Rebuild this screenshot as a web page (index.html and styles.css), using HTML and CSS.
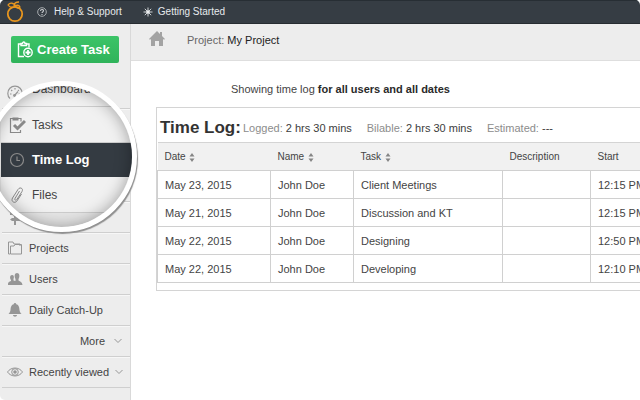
FILE: index.html
```html
<!DOCTYPE html>
<html lang="en">
<head>
<meta charset="utf-8">
<title>Time Log</title>
<link rel="stylesheet" href="styles.css">
</head>
<body>
<svg class="defs" aria-hidden="true">
  <symbol id="i-gauge" viewBox="0 0 16 16"><path d="M3 13.500A7.200 7.200 0 1 1 13 13.500" fill="none" stroke="currentColor" stroke-width="1.200"/><path d="M3 9h1.500M4.200 5l1 1M8 3v1.500M11.800 5l-.8.8M11.500 9H13M7.500 10.500L11 6.500" fill="none" stroke="currentColor" stroke-width="1.200"/><circle cx="7.500" cy="10.500" r="1.400" fill="currentColor"/></symbol>
  <symbol id="i-check" viewBox="0 0 18 18"><path d="M5.500 2.500H2.500v14h10V14M10 2.500h3v3" fill="none" stroke="currentColor" stroke-width="1.200"/><path d="M4.500 1.500h6v3h-6z" fill="currentColor"/><path d="M6 9l3.500 3.500 7.500-7.500" fill="none" stroke="currentColor" stroke-width="3"/></symbol>
  <symbol id="i-clock" viewBox="0 0 18 18"><circle cx="9" cy="9" r="6.500" fill="none" stroke="currentColor" stroke-width="1.200"/><path d="M9 5.500v4h3" fill="none" stroke="currentColor" stroke-width="1.200"/></symbol>
  <symbol id="i-clip" viewBox="0 0 18 18"><path d="M11.500 5L7 12.500c-.8 1.500 1 2.500 1.900 1L14 5.500c1.800-3-2-5-3.900-2.200L4.500 12c-2 3.600 2.500 6 4.600 2.800L13.500 8" fill="none" stroke="currentColor" stroke-width="1"/></symbol>
  <symbol id="i-sign" viewBox="0 0 16 16"><path d="M7 2h2v14H7z" fill="currentColor"/><path d="M3 3h9l2 1.500L12 6H3zM13 9H5L3 10.500 5 12h8z" fill="currentColor"/></symbol>
  <symbol id="i-folder" viewBox="0 0 16 16"><path d="M3 14H1.500V2H6l1 2h6v2" fill="none" stroke="currentColor" stroke-width="1"/><path d="M3.500 14V6H7l1-1.500h6.500V14z" fill="none" stroke="currentColor" stroke-width="1"/></symbol>
  <symbol id="i-users" viewBox="0 0 16 16"><path d="M1 13c0-2 1-2 3-3V9C2.500 7 3 4 5 4s2.300 2 1.500 4v1.500C8 10 8 10 8.500 9.700V8C7 5.500 7.500 2 10 2s3 3.500 1.500 6v1.500C14 11 15 11 15.500 14H1z" fill="currentColor"/></symbol>
  <symbol id="i-bell" viewBox="0 0 16 16"><path d="M8 1c.8 0 1.200.6 1.200 1.300C12 3 12.300 5.500 12.500 8c.2 2 1 2.800 2 4h-13c1-1.200 1.800-2 2-4 .2-2.500.5-5 3.300-5.700C6.800 1.600 7.200 1 8 1zM6 13h4c0 2.300-4 2.300-4 0z" fill="currentColor"/></symbol>
  <symbol id="i-eye" viewBox="0 0 16 16"><path d="M.5 8C4 2.700 12 2.700 15.500 8 12 13.300 4 13.300.5 8z" fill="none" stroke="currentColor"/><circle cx="8" cy="8" r="3.300" fill="none" stroke="currentColor"/><circle cx="8" cy="8" r="1.800" fill="currentColor"/></symbol>
  <symbol id="i-down" viewBox="0 0 8 6"><path d="M.5 1L4 4.500 7.500 1" fill="none" stroke="currentColor"/></symbol>
  <symbol id="i-sort" viewBox="0 0 6 9"><path d="M3 0l2.500 3.500h-5zM3 9L.5 5.500h5z" fill="currentColor"/></symbol>
</svg>

<div class="app">
  <header class="topbar">
    <a class="logo" href="#" aria-label="Home">
      <svg viewBox="0 0 20 22" width="20" height="22"><circle cx="10" cy="13" r="7.200" fill="none" stroke="#e8961e" stroke-width="1.800"/><path d="M3 4c2-3 6-2 8 1C8 7 5 7 3 4zM9 5c0-3 2-4 5-4M10 5c2-1 4-1 5 1-2 2-4 1-5-1z" fill="none" stroke="#e8961e" stroke-width="1.300"/></svg>
    </a>
    <a class="toplink help" href="#">
      <svg viewBox="0 0 10 10" width="10" height="10"><circle cx="5" cy="5" r="4.300" fill="none" stroke="#a9adb0"/><path d="M3.500 4c0-2 3-2 3-.2C6.500 5 5 4.900 5 6M5 7v1" fill="none" stroke="#c9cccf" stroke-width="1.100"/></svg>
      <span>Help &amp; Support</span>
    </a>
    <a class="toplink" href="#">
      <svg viewBox="0 0 10 10" width="10" height="10"><path d="M5 .5v9M.5 5h9M1.800 1.800l6.400 6.400M8.200 1.800L1.800 8.200" stroke="#dfe2e4" stroke-width=".9"/><circle cx="5" cy="5" r="1.800" fill="#eceeef"/></svg>
      <span>Getting Started</span>
    </a>
  </header>

  <div class="body">
    <aside class="sidebar">
      <button class="create" type="button">
        <svg viewBox="0 0 16 17" width="16" height="17" fill="none" stroke="#fff" stroke-width="1.400"><path d="M4 3H1.500v12.500H7M9.500 3H12v3.500"/><path d="M4 4.500v-2h1.500C5.500.5 8 .5 8 2.500h1.500v2z"/><circle cx="11" cy="11.500" r="4.200"/><path d="M11 9v5M8.500 11.500h5" stroke-width="1.800"/></svg>
        Create Task
      </button>
      <nav class="menu">
        <div class="row"><svg><use href="#i-gauge"/></svg></div>
        <div class="row"></div>
        <div class="row"></div>
        <div class="row"></div>
        <div class="row"><svg><use href="#i-sign"/></svg></div>
        <a class="row" href="#"><svg><use href="#i-folder"/></svg>Projects</a>
        <a class="row" href="#"><svg><use href="#i-users"/></svg>Users</a>
        <a class="row" href="#"><svg><use href="#i-bell"/></svg>Daily Catch-Up</a>
        <a class="row more" href="#">More<svg class="chev"><use href="#i-down"/></svg></a>
        <a class="row" href="#"><svg><use href="#i-eye"/></svg>Recently viewed<svg class="chev"><use href="#i-down"/></svg></a>
      </nav>
    </aside>

    <main class="main">
      <div class="crumbs">
        <svg viewBox="0 0 16 15" width="16" height="15"><path d="M8 0l3 3V1h2v4l3 3-1 .8L14 8v7h-4v-5H6v5H2V8l-1 .8L0 8z" fill="#a3a3a3"/></svg>
        <p>Project: <span>My Project</span></p>
      </div>
      <div class="content">
        <p class="summary">Showing time log <b>for all users and all dates</b></p>
        <section class="card">
          <div class="cardhead">
            <h1>Time Log:</h1>
            <p>Logged: <span>2 hrs 30 mins</span></p>
            <p>Bilable: <span>2 hrs 30 mins</span></p>
            <p>Estimated: <span>---</span></p>
          </div>
          <table>
            <colgroup><col class="c-date"><col class="c-name"><col class="c-task"><col class="c-desc"><col class="c-start"></colgroup>
            <thead>
              <tr><th>Date <svg><use href="#i-sort"/></svg></th><th>Name <svg><use href="#i-sort"/></svg></th><th>Task <svg><use href="#i-sort"/></svg></th><th>Description</th><th>Start</th></tr>
            </thead>
            <tbody>
              <tr><td>May 23, 2015</td><td>John Doe</td><td>Client Meetings</td><td></td><td>12:15 PM</td></tr>
              <tr><td>May 21, 2015</td><td>John Doe</td><td>Discussion and KT</td><td></td><td>12:15 PM</td></tr>
              <tr><td>May 22, 2015</td><td>John Doe</td><td>Designing</td><td></td><td>12:50 PM</td></tr>
              <tr><td>May 22, 2015</td><td>John Doe</td><td>Developing</td><td></td><td>12:10 PM</td></tr>
            </tbody>
          </table>
        </section>
      </div>
    </main>
  </div>

  <nav class="lens">
    <a class="lensrow" href="#"><svg></svg>Dashboard</a>
    <a class="lensrow" href="#"><svg><use href="#i-check"/></svg>Tasks</a>
    <a class="lensrow active" href="#"><svg><use href="#i-clock"/></svg>Time Log</a>
    <a class="lensrow" href="#"><svg><use href="#i-clip"/></svg>Files</a>
  </nav>
</div>
</body>
</html>
```

FILE: styles.css
```css
* { box-sizing: border-box; }
body {
  margin: 0;
  background: #fff;
  color: #444;
  font: 11px/16px "Liberation Sans", Arial, sans-serif;
}
a { color: inherit; text-decoration: none; }
p, h1 { margin: 0; }
.defs { display: none; }
.app {
  position: relative;
  display: flex;
  flex-direction: column;
  min-height: 100vh;
  overflow: hidden;
  border-radius: 5px;
}
.topbar {
  display: flex;
  align-items: center;
  height: 24px;
  padding-left: 5px;
  background: #363d44;
  border-top: 1px solid #272e34;
  border-bottom: 1px solid #272c31;
  color: #e6eaed;
  font-size: 10px;
}
.logo { display: flex; width: 32px; }
.toplink { display: flex; align-items: center; gap: 5px; }
.help { gap: 7px; margin-right: 21px; }

.body { display: flex; flex: 1; }
.sidebar {
  flex: none;
  width: 131px;
  background: #ededed;
  border-right: 1px solid #d9d9d9;
}
.create {
  display: flex;
  align-items: center;
  gap: 4px;
  width: 108px;
  height: 27px;
  margin: 12px 0 15px 11px;
  padding: 0 6px;
  border: 0;
  border-radius: 2px;
  background: linear-gradient(#3cc468, #2fb35a);
  color: #fff;
  font: bold 13px/16px "Liberation Sans", Arial, sans-serif;
  white-space: nowrap;
}
.row {
  display: flex;
  align-items: center;
  gap: 6px;
  height: 31px;
  margin-left: 2px;
  padding-left: 5px;
  border-bottom: 1px solid #cfcfcf;
  white-space: nowrap;
}
.row + .row { box-shadow: inset 0 1px #f7f7f7; }
.row svg { flex: none; width: 16px; height: 16px; color: #969696; }
.more { justify-content: flex-end; }
.row .chev { width: 8px; height: 6px; margin: 0 8px 0 auto; }
.more .chev { margin-left: 3px; }

.main { flex: 1; min-width: 0; }
.crumbs {
  display: flex;
  align-items: center;
  gap: 22px;
  height: 37px;
  padding: 0 0 7px 18px;
  background: #ededed;
  border-bottom: 1px solid #dedede;
  color: #666;
}
.crumbs p { padding-top: 2px; }
.crumbs span { color: #222; }
.content { padding: 20px 0 0 25px; overflow: hidden; }
.summary { padding-left: 75px; margin-bottom: 10px; }
.summary b { color: #2a2a2a; }
.card {
  border: 1px solid #d4d4d4;
  border-right: 0;
  padding-bottom: 7px;
  overflow: hidden;
}
.cardhead {
  display: flex;
  align-items: center;
  gap: 15px;
  height: 34px;
  padding: 5px 0 0 3px;
  color: #8c8c8c;
  white-space: nowrap;
}
.cardhead h1 { margin-right: -13px; color: #333; font-size: 17px; line-height: 20px; }
.cardhead span { color: #3c3c3c; }

table { width: 100%; table-layout: fixed; border-collapse: collapse; }
.c-date { width: 113px; }
.c-name { width: 83px; }
.c-task { width: 149px; }
.c-desc { width: 88px; }
th, td { padding: 0 0 0 7px; text-align: left; white-space: nowrap; }
th {
  height: 28px;
  background: #f1f1f1;
  border-top: 1px solid #d4d4d4;
  font-size: 10px;
  font-weight: normal;
}
th svg { width: 6px; height: 9px; margin-left: 1px; vertical-align: -2px; color: #858585; }
td { height: 28px; border: 1px solid #d0d0d0; }
td:last-child { border-right: 0; }

/* Magnifier laid over the menu */
.lens {
  position: absolute;
  top: 81px;
  left: -14px;
  width: 151px;
  height: 151px;
  overflow: hidden;
  border: 5px solid #fff;
  border-radius: 50%;
  background: #e6e6e6;
  box-shadow: 1px 2px 1px #8f8f8f;
  font-size: 12px;
}
.lens::after {
  content: "";
  position: absolute;
  inset: 0;
  border-radius: 50%;
  box-shadow: inset 0 0 16px rgba(0, 0, 0, .35);
  pointer-events: none;
}
.lensrow {
  display: flex;
  align-items: center;
  gap: 6px;
  height: 36px;
  margin-left: 10px;
  padding-left: 7px;
  background: #f1f1f1;
  border-bottom: 1px solid #cdcdcd;
}
.lensrow:first-child { margin-top: -15px; }
.lensrow svg { flex: none; width: 18px; height: 18px; color: #8a8a8a; }
.lensrow.active {
  height: 34px;
  background: #343b42;
  border: 0;
  color: #fff;
  font-size: 13px;
  font-weight: bold;
}
```
